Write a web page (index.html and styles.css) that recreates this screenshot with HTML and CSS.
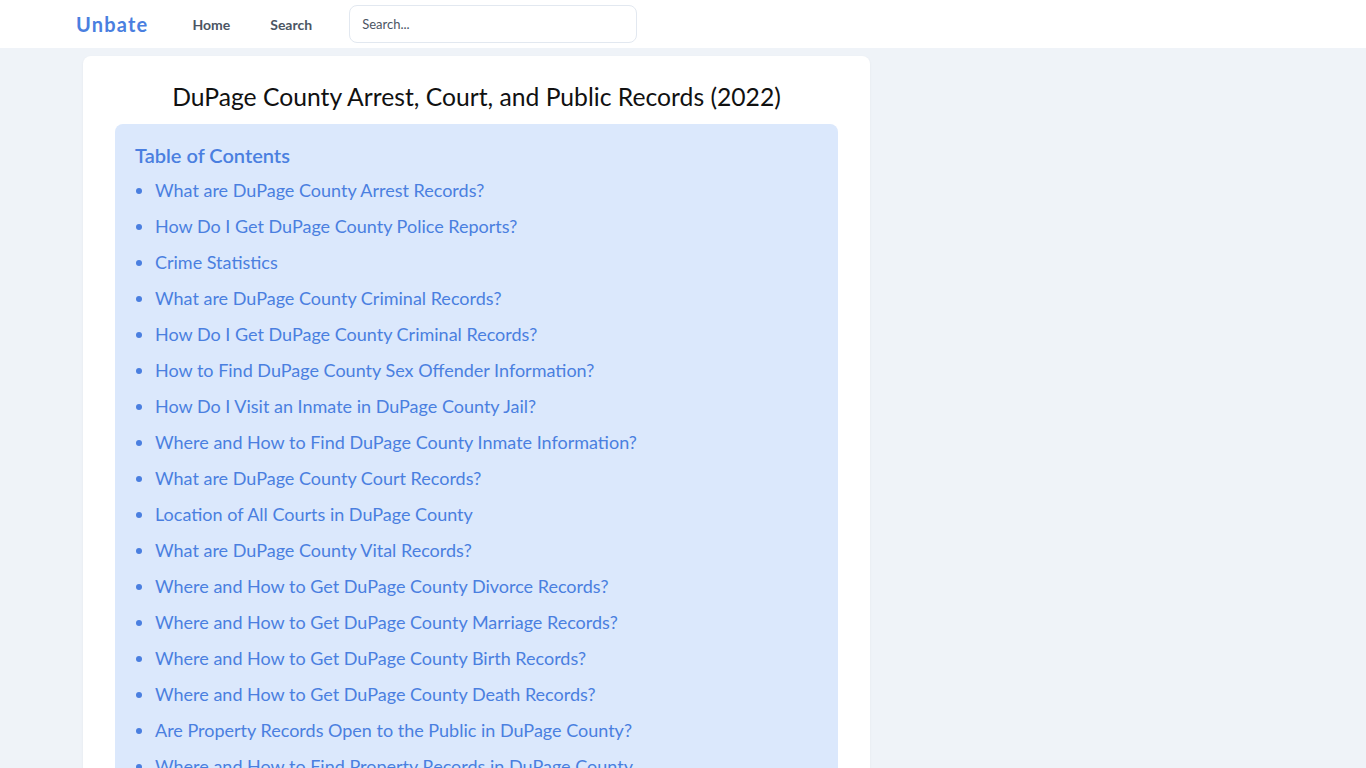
FILE: index.html
```html
<!DOCTYPE html>
<html lang="en">
<head>
  <meta charset="UTF-8">
  <meta name="viewport" content="width=device-width, initial-scale=1.0">
  <title>DuPage County Arrest, Court, and Public Records (2022)</title>
  <link rel="stylesheet" href="styles.css">
</head>
<body>
  <header class="topbar">
    <div class="topbar-inner">
      <a class="logo" href="#">Unbate</a>
      <nav class="nav">
        <a href="#">Home</a>
        <a href="#">Search</a>
      </nav>
      <input class="search-input" type="text" placeholder="Search...">
    </div>
  </header>

  <main class="page">
    <article class="card">
      <h1 class="title">DuPage County Arrest, Court, and Public Records (2022)</h1>

      <section class="toc">
        <h2 class="toc-title">Table of Contents</h2>
        <ul class="toc-list">
          <li><a href="#">What are DuPage County Arrest Records?</a></li>
          <li><a href="#">How Do I Get DuPage County Police Reports?</a></li>
          <li><a href="#">Crime Statistics</a></li>
          <li><a href="#">What are DuPage County Criminal Records?</a></li>
          <li><a href="#">How Do I Get DuPage County Criminal Records?</a></li>
          <li><a href="#">How to Find DuPage County Sex Offender Information?</a></li>
          <li><a href="#">How Do I Visit an Inmate in DuPage County Jail?</a></li>
          <li><a href="#">Where and How to Find DuPage County Inmate Information?</a></li>
          <li><a href="#">What are DuPage County Court Records?</a></li>
          <li><a href="#">Location of All Courts in DuPage County</a></li>
          <li><a href="#">What are DuPage County Vital Records?</a></li>
          <li><a href="#">Where and How to Get DuPage County Divorce Records?</a></li>
          <li><a href="#">Where and How to Get DuPage County Marriage Records?</a></li>
          <li><a href="#">Where and How to Get DuPage County Birth Records?</a></li>
          <li><a href="#">Where and How to Get DuPage County Death Records?</a></li>
          <li><a href="#">Are Property Records Open to the Public in DuPage County?</a></li>
          <li><a href="#">Where and How to Find Property Records in DuPage County</a></li>
          <li><a href="#">DuPage County Public Records Search</a></li>
        </ul>
      </section>
    </article>
  </main>
</body>
</html>
```

FILE: styles.css
```css
:root {
  --brand: #4a7fe0;
  --link: #4a7fe0;
  --page-bg: #eff3f8;
  --toc-bg: #dbe8fc;
  --nav-text: #4b5563;
  --border: #e2e8f0;
}

* {
  box-sizing: border-box;
  margin: 0;
  padding: 0;
}

body {
  font-family: Lato, "Noto Sans", sans-serif;
  background-color: var(--page-bg);
  color: #111;
}

a {
  text-decoration: none;
}

.topbar {
  background-color: white;
  height: 48px;
}

.topbar-inner {
  display: flex;
  align-items: center;
  height: 100%;
  padding-left: 76px;
}

.logo {
  color: var(--brand);
  font-size: 20px;
  font-weight: bold;
  letter-spacing: 1.2px;
}

.nav {
  display: flex;
  gap: 40px;
  margin-left: 44px;
}

.nav a {
  color: var(--nav-text);
  font-size: 14px;
  font-weight: bold;
}

.search-input {
  margin-left: 37px;
  width: 288px;
  height: 38px;
  border: 1px solid var(--border);
  border-radius: 8px;
  padding: 0 12px;
  font-family: inherit;
  font-size: 13px;
  color: #333;
  outline: none;
}

.search-input::placeholder {
  color: #4b5563;
}

.page {
  padding: 8px 0 0 83px;
}

.card {
  width: 787px;
  background-color: white;
  border-radius: 8px;
  box-shadow: 0 1px 3px rgba(0, 0, 0, 0.05);
  padding: 20px 32px 32px;
}

.title {
  text-align: center;
  font-size: 24.7px;
  font-weight: normal;
  line-height: 42px;
  margin-bottom: 6px;
}

.toc {
  background-color: var(--toc-bg);
  border-radius: 8px;
  padding: 16px 20px 20px;
}

.toc-title {
  color: var(--link);
  font-size: 20px;
  font-weight: 600;
  line-height: 30px;
  margin-bottom: 2px;
}

.toc-list {
  list-style: disc;
  padding-left: 20px;
  color: var(--link);
}

.toc-list li {
  font-size: 18px;
  line-height: 36px;
}

.toc-list a {
  color: var(--link);
}
```
